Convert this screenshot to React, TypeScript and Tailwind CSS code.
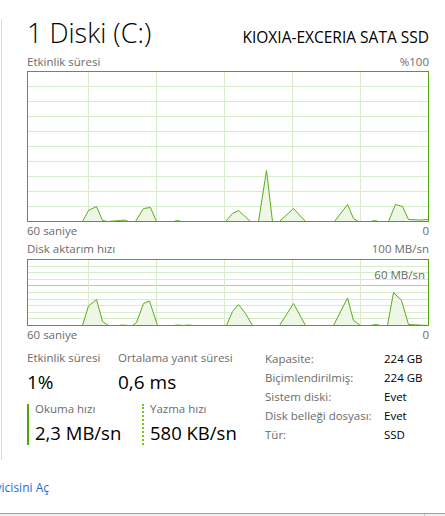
import React from "react";

type Pt = [number, number];

// page coordinates of the sampled peaks, converted to chart space below
const activity: Pt[] = [
  [27, 221], [82, 221], [88, 210], [96, 206], [102, 220], [107, 221], [120, 220], [124, 219.5], [128, 221],
  [135, 221], [143, 208], [150, 207], [156, 221], [173, 221], [177, 220], [181, 221], [225, 221], [232, 213],
  [238, 210], [250, 221], [258, 221], [266, 170], [272, 221], [279, 221], [293, 208], [305, 221], [334, 221],
  [347, 204], [353, 218], [358, 221], [370, 221], [374, 220], [378, 221], [388, 221], [395, 204], [402, 206],
  [408, 219], [420, 219.5], [428, 219],
];

const transfer: Pt[] = [
  [27, 325], [82, 325], [88, 305.5], [96, 299], [102, 321], [108, 325], [118, 325], [122, 324.5], [128, 325],
  [132, 325], [136, 322], [143, 303], [149, 300.5], [157, 325], [173, 325], [178, 324.5], [183, 325], [188, 324.5],
  [193, 325], [226, 325], [232, 311], [238, 304], [245, 313], [252, 325], [279, 325], [293, 303], [305, 325],
  [333, 325], [347, 297.5], [353, 320], [360, 325], [370, 325], [375, 324], [380, 325], [387, 325], [393, 292],
  [401, 300], [408, 324], [418, 324.5], [428, 325],
];

function Chart({ points, top, height, rows, midRow }: { points: Pt[]; top: number; height: number; rows: number; midRow?: number }) {
  const w = 402;
  const bottom = height - 1;
  const local = points.map(([x, y]) => [x - 27 + 0.5, y - top + 0.5] as Pt);
  const line = local.map(([x, y], i) => `${i ? "L" : "M"}${x} ${y}`).join(" ");
  const area = `${line} L${local[local.length - 1][0]} ${bottom + 0.5} L${local[0][0]} ${bottom + 0.5} Z`;
  const step = (height - 1) / rows;
  const hLines = Array.from({ length: rows - 1 }, (_, i) => Math.round((i + 1) * step));
  const vLines = [61, 129, 197, 265, 333];

  return (
    <svg width={w} height={height} className="block">
      <rect x={0} y={0} width={w} height={height} fill="#ffffff" />
      {hLines.map((y, i) => (
        <line key={"h" + i} x1={0} x2={w} y1={y + 0.5} y2={y + 0.5} stroke={midRow === i + 1 ? "#a9d68c" : "#d9ecc9"} strokeWidth={1} />
      ))}
      {vLines.map((x) => (
        <line key={"v" + x} x1={x + 0.5} x2={x + 0.5} y1={0} y2={height} stroke="#d9ecc9" strokeWidth={1} />
      ))}
      <path d={area} fill="#eef7e6" />
      <path d={line} fill="none" stroke="#5aae1c" strokeWidth={1} strokeLinejoin="round" />
      <rect x={0.5} y={0.5} width={w - 1} height={height - 1} fill="none" stroke="#4da60c" strokeWidth={1} />
    </svg>
  );
}

export default function App() {
  return (
    <div className="w-[445px] h-[516px] bg-white overflow-hidden flex flex-col font-['Open_Sans','Noto_Sans',sans-serif] text-black">
      <div className="mt-[19px] ml-[1px] h-[441px] border-l border-[#dadada] pl-[25px] pr-[16px]">
        <div className="flex items-baseline justify-between h-[36px]">
          <span className="text-[27px] leading-[27px] font-light">1 Diski (C:)</span>
          <span className="text-[15.5px] leading-[20px]">KIOXIA-EXCERIA SATA SSD</span>
        </div>

        <div className="flex justify-between h-[14px] text-[11.5px] leading-[14px] text-[#6b6b6b]">
          <span>Etkinlik süresi</span>
          <span>%100</span>
        </div>
        <div className="mt-[2px]">
          <Chart points={activity} top={71} height={151} rows={10} />
        </div>
        <div className="flex justify-between h-[18px] text-[11.5px] leading-[18px] text-[#6b6b6b]">
          <span>60 saniye</span>
          <span>0</span>
        </div>

        <div className="mt-[2px] flex justify-between h-[14px] text-[11.5px] leading-[14px] text-[#6b6b6b]">
          <span>Disk aktarım hızı</span>
          <span>100 MB/sn</span>
        </div>
        <div className="mt-[3px] relative">
          <Chart points={transfer} top={259} height={67} rows={10} midRow={4} />
          <span className="absolute right-[4px] top-[9px] text-[11.5px] leading-[14px] text-[#6b6b6b]">60 MB/sn</span>
        </div>
        <div className="flex justify-between h-[18px] text-[11.5px] leading-[18px] text-[#6b6b6b]">
          <span>60 saniye</span>
          <span>0</span>
        </div>

        <div className="flex">
          <div className="w-[238px] flex flex-col">
            <div className="flex mt-[7px]">
              <div className="w-[91px]">
                <div className="text-[11.5px] leading-[14px] text-[#6b6b6b]">Etkinlik süresi</div>
                <div className="mt-[5px] text-[19px] leading-[24px]">1%</div>
              </div>
              <div>
                <div className="text-[11.5px] leading-[14px] text-[#6b6b6b]">Ortalama yanıt süresi</div>
                <div className="mt-[5px] text-[19px] leading-[24px]">0,6 ms</div>
              </div>
            </div>
            <div className="flex mt-[10px]">
              <div className="w-[115px] border-l-2 border-[#4da60c] pl-[6px] h-[41px]">
                <div className="text-[11.5px] leading-[10px] text-[#6b6b6b]">Okuma hızı</div>
                <div className="mt-[7px] text-[18.5px] leading-[24px] whitespace-nowrap">2,3 MB/sn</div>
              </div>
              <div className="border-l-2 border-dotted border-[#78c51f] pl-[6px] h-[41px]">
                <div className="text-[11.5px] leading-[10px] text-[#6b6b6b]">Yazma hızı</div>
                <div className="mt-[7px] text-[18.5px] leading-[24px] whitespace-nowrap">580 KB/sn</div>
              </div>
            </div>
          </div>

          <div className="pt-[6px] grid grid-cols-[119px_auto] text-[11.5px] leading-[17.6px]">
            <span className="text-[#6b6b6b]">Kapasite:</span>
            <span>224 GB</span>
            <span className="text-[#6b6b6b]">Biçimlendirilmiş:</span>
            <span>224 GB</span>
            <span className="text-[#6b6b6b]">Sistem diski:</span>
            <span>Evet</span>
            <span className="text-[#6b6b6b]">Disk belleği dosyası:</span>
            <span>Evet</span>
            <span className="text-[#6b6b6b]">Tür:</span>
            <span>SSD</span>
          </div>
        </div>
      </div>

      <div className="mt-[21px] w-[49px] flex justify-end h-[14px]">
        <span className="shrink-0 whitespace-nowrap text-[12px] leading-[14px] text-[#1a6fd4]">Kaynak İzleyicisini Aç</span>
      </div>

      <div className="mt-auto h-[3px] border-t border-[#a0a0a0] bg-[#f0f0f0] flex">
        <div className="ml-[424px] w-px h-full bg-[#c4c4c4]" />
      </div>
    </div>
  );
}
